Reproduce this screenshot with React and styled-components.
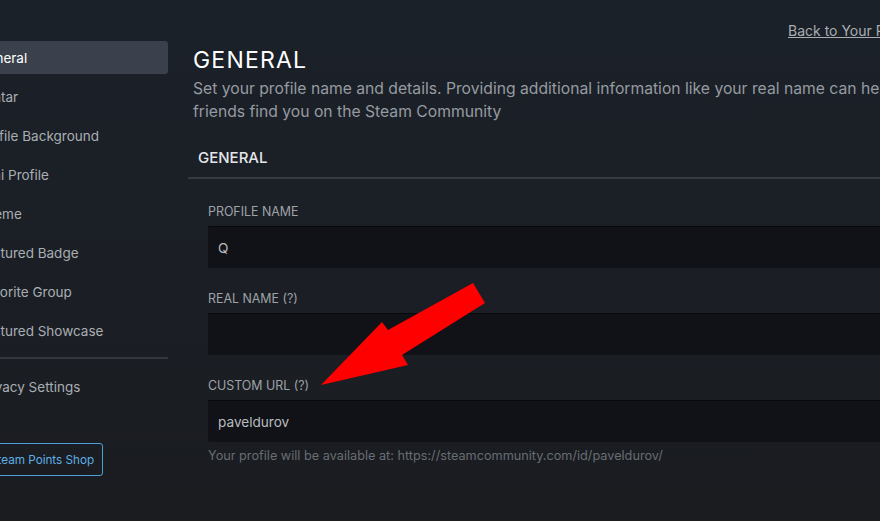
import React from "react";
import styled, { createGlobalStyle } from "styled-components";

const GlobalStyle = createGlobalStyle`
  html, body { margin: 0; padding: 0; background: #1a1d22; }
  body { overflow: hidden; font-family: Inter, "Noto Sans", Arial, sans-serif; }
  * { box-sizing: border-box; }
`;

const Page = styled.div`
  position: relative;
  width: 880px;
  height: 521px;
  overflow: hidden;
  display: flex;
  align-items: flex-start;
  gap: 20px;
  background: linear-gradient(to bottom, #1b2129 0%, #1b1f26 40%, #1a1c20 100%);
`;

const Sidebar = styled.nav`
  flex: 0 0 204px;
  margin-left: -36px;
  padding-top: 41px;
  display: flex;
  flex-direction: column;
  gap: 6px;
`;

const NavItem = styled.div`
  height: 33px;
  display: flex;
  align-items: center;
  padding-left: 13.5px;
  border-radius: 3px;
  font-size: 13.5px;
  white-space: nowrap;
  color: ${(p) => (p.$active ? "#ffffff" : "#a9aeb3")};
  background: ${(p) => (p.$active ? "#3b414c" : "transparent")};
`;

const NavDivider = styled.div`
  height: 2px;
  background: #34383e;
  margin: 4px 0 5px;
`;

const ShopButton = styled.div`
  margin-top: 34px;
  align-self: flex-start;
  height: 33px;
  display: flex;
  align-items: center;
  padding: 0 8px 0 25px;
  border: 1px solid #4f9ed6;
  border-radius: 3px;
  color: #5faee6;
  font-size: 11.7px;
  white-space: nowrap;
`;

const Main = styled.main`
  flex: 0 0 780px;
  padding-top: 22px;
  display: flex;
  flex-direction: column;
`;

const TopRow = styled.div`
  height: 18px;
  display: flex;
  justify-content: flex-start;
  padding-left: 600px;
`;

const BackLink = styled.a`
  font-size: 14px;
  line-height: 18px;
  color: #a9adb1;
  text-decoration: underline;
  white-space: nowrap;
`;

const Header = styled.header`
  padding: 5px 0 0 5px;
`;

const Title = styled.h1`
  margin: 0;
  font-size: 23px;
  line-height: 30px;
  font-weight: 400;
  letter-spacing: 1.2px;
  color: #ffffff;
`;

const Description = styled.p`
  margin: 2px 0 0;
  font-size: 15.7px;
  line-height: 23px;
  color: #969ba1;
  width: 770px;
`;

const SectionHead = styled.div`
  margin-top: 24px;
  padding: 1px 10px 9px;
  border-bottom: 2px solid #363a41;
  font-size: 15px;
  line-height: 20px;
  font-weight: 500;
  color: #e4e7ea;
`;

const Form = styled.div`
  padding: 25px 0 0 20px;
  display: flex;
  flex-direction: column;
  gap: 23px;
`;

const Field = styled.div`
  display: flex;
  flex-direction: column;
`;

const Label = styled.label`
  font-size: 12.4px;
  line-height: 16px;
  text-transform: uppercase;
  color: #9ea3a8;
  margin-bottom: 6px;
`;

const Input = styled.div`
  height: 42px;
  display: flex;
  align-items: center;
  padding-left: 10px;
  background: #101217;
  border-top: 1px solid #07080a;
  border-radius: 2px;
  font-size: 13.6px;
  color: #b9bcbf;
`;

const Hint = styled.div`
  margin-top: 6px;
  font-size: 12.7px;
  line-height: 16px;
  color: #686d73;
  white-space: nowrap;
`;

const Overlay = styled.svg`
  position: absolute;
  left: 0;
  top: 0;
  pointer-events: none;
`;

const navItems = [
  "General",
  "Avatar",
  "Profile Background",
  "Mini Profile",
  "Theme",
  "Featured Badge",
  "Favorite Group",
  "Featured Showcase",
];

export default function App() {
  return (
    <>
      <GlobalStyle />
      <Page>
        <Sidebar>
          {navItems.map((n, i) => (
            <NavItem key={n} $active={i === 0}>
              {n}
            </NavItem>
          ))}
          <NavDivider />
          <NavItem>Privacy Settings</NavItem>
          <ShopButton>Steam Points Shop</ShopButton>
        </Sidebar>
        <Main>
          <TopRow>
            <BackLink>Back to Your Profile</BackLink>
          </TopRow>
          <Header>
            <Title>GENERAL</Title>
            <Description>
              Set your profile name and details. Providing additional information like your real name can help your
              friends find you on the Steam Community
            </Description>
          </Header>
          <SectionHead>GENERAL</SectionHead>
          <Form>
            <Field>
              <Label>Profile Name</Label>
              <Input>Q</Input>
            </Field>
            <Field>
              <Label>Real Name (?)</Label>
              <Input />
            </Field>
            <Field>
              <Label>Custom URL (?)</Label>
              <Input>paveldurov</Input>
              <Hint>Your profile will be available at: https://steamcommunity.com/id/paveldurov/</Hint>
            </Field>
          </Form>
        </Main>
        <Overlay width="880" height="521" viewBox="0 0 880 521">
          <polygon
            points="473,283 485,303 402,355 408,365 321,385 382,322 388,330"
            fill="#ff0000"
          />
        </Overlay>
      </Page>
    </>
  );
}
